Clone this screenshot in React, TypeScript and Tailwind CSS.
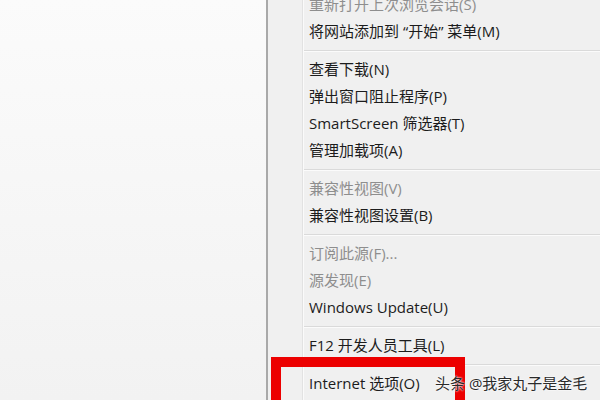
const font = { fontFamily: '"Open Sans", "Noto Sans CJK SC", sans-serif' };

type Entry = { label: string; disabled?: boolean } | "sep";

const entries: Entry[] = [
  { label: "重新打开上次浏览会话(S)", disabled: true },
  { label: "将网站添加到 \u201C开始\u201D 菜单(M)" },
  "sep",
  { label: "查看下载(N)" },
  { label: "弹出窗口阻止程序(P)" },
  { label: "SmartScreen 筛选器(T)" },
  { label: "管理加载项(A)" },
  "sep",
  { label: "兼容性视图(V)", disabled: true },
  { label: "兼容性视图设置(B)" },
  "sep",
  { label: "订阅此源(F)...", disabled: true },
  { label: "源发现(E)", disabled: true },
  { label: "Windows Update(U)" },
  "sep",
  { label: "F12 开发人员工具(L)" },
  "sep",
  { label: "Internet 选项(O)" },
];

export default function App() {
  return (
    <div className="relative flex h-[400px] w-[600px] overflow-hidden" style={font}>
      {/* page behind the menu */}
      <div className="w-[266px] shrink-0 bg-gradient-to-b from-[#fbfbfb] to-[#f2f2f2]" />

      {/* context menu */}
      <div className="flex flex-1 border-l-2 border-[#a9a9a9] bg-[#f0f0f0]">
        <div className="w-[34px] shrink-0" />
        <div className="w-px shrink-0 bg-[#e2e2e2]" />
        <div className="w-px shrink-0 bg-[#fafafa]" />
        <div className="-mt-[9px] flex flex-1 flex-col">
          {entries.map((e, i) =>
            e === "sep" ? (
              <div key={i} className="flex h-[11px] flex-col justify-center">
                <div className="h-px bg-[#dadada]" />
                <div className="h-px bg-[#fbfbfb]" />
              </div>
            ) : (
              <div
                key={i}
                className={`flex h-[27px] shrink-0 items-center pl-[5px] text-[15px] whitespace-nowrap ${
                  e.disabled ? "text-[#8e8e8e]" : "text-[#1c1c1c]"
                }`}
              >
                {e.label}
              </div>
            )
          )}
        </div>
      </div>

      {/* red highlight box */}
      <div className="absolute left-[271px] top-[357px] h-[60px] w-[194px] border-[10px] border-[#ec0000]" />

      {/* watermark */}
      <div
        className="absolute left-[435px] top-[372px] text-[15px] text-[#2a2a2a]"
        style={{ ...font, textShadow: "0 0 2px #fff, 0 0 2px #fff" }}
      >
        头条 @我家丸子是金毛
      </div>
    </div>
  );
}
